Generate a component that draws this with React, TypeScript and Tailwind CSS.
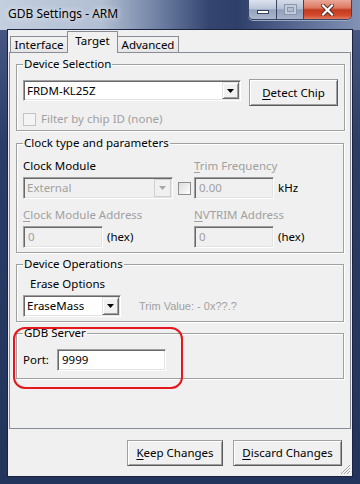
import React from 'react';

// sunken 3D edit/combo border used by the classic controls
const sunken =
  'border border-t-[#a0a0a0] border-l-[#a0a0a0] border-r-white border-b-white shadow-[inset_1px_1px_0_#696969,inset_-1px_-1px_0_#e3e3e3]';
const raised =
  'border border-t-[#e3e3e3] border-l-[#e3e3e3] border-r-[#696969] border-b-[#696969] shadow-[inset_1px_1px_0_#ffffff,inset_-1px_-1px_0_#a0a0a0]';

function U({ children }: { children: React.ReactNode }) {
    return <span className="underline decoration-1 underline-offset-[2px]">{children}</span>;
}

function Arrow({ disabled }: { disabled?: boolean }) {
    return (
        <svg width="7" height="4" viewBox="0 0 7 4">
            <path d="M0 0h7L3.5 4z" fill={disabled ? '#a8a8a8' : '#000000'} />
        </svg>
    );
}

function CheckBox({ disabled }: { disabled?: boolean }) {
    return (
        <div
            className={
                disabled
                    ? 'h-[13px] w-[13px] shrink-0 border border-[#c4c4c4] bg-[#f4f4f4]'
                    : 'h-[13px] w-[13px] shrink-0 border border-[#8e8f8f] bg-[linear-gradient(135deg,#dcdcdc,#ffffff)]'
            }
        />
    );
}

function Combo({ value, width, disabled }: { value: string; width: string; disabled?: boolean }) {
    return (
        <div className={`flex h-[22px] ${width} ${sunken} ${disabled ? 'bg-[#f0f0f0] text-[#a0a0a0]' : 'bg-white'}`}>
            <div className="flex flex-1 items-center pl-[3px]">{value}</div>
            <div
                className={`m-[1px] flex w-[17px] items-center justify-center bg-[#f0f0f0] ${
                    disabled ? 'border border-[#d0d0d0]' : raised
                }`}
            >
                <Arrow disabled={disabled} />
            </div>
        </div>
    );
}

function Edit({ value, width, disabled }: { value: string; width: string; disabled?: boolean }) {
    return (
        <div
            className={`flex h-[22px] items-center pl-[4px] ${width} ${sunken} ${
                disabled ? 'bg-[#f0f0f0] text-[#a0a0a0]' : 'bg-white'
            }`}
        >
            {value}
        </div>
    );
}

function Button({ width, height, children }: { width: string; height: string; children: React.ReactNode }) {
    return (
        <div
            className={`flex items-center justify-center bg-[#f0f0f0] ${width} ${height} border border-t-[#a0a0a0] border-l-[#a0a0a0] border-r-[#5a5a5a] border-b-[#5a5a5a] shadow-[inset_1px_1px_0_#ffffff,inset_-1px_-1px_0_#a0a0a0]`}
        >
            {children}
        </div>
    );
}

function Group({ title, className, children }: { title: string; className: string; children: React.ReactNode }) {
    return (
        <fieldset
            className={`border border-[#a0a0a0] px-[6px] shadow-[1px_1px_0_#ffffff,inset_1px_1px_0_#ffffff] ${className}`}
        >
            <legend className="px-[1px] leading-[16px]">{title}</legend>
            {children}
        </fieldset>
    );
}

function TitleBar() {
    return (
        <div className="flex h-[30px] items-start bg-[linear-gradient(90deg,#c3cedf_0%,#b2bfd3_28%,#6a7ca0_45%,#34466f_58%,#2e3f69_66%,#52648d_80%,#8292b4_100%)]">
            <div className="pl-[8px] pt-[6px] text-[12px] leading-[16px] [text-shadow:0_0_6px_#ffffff]">
                GDB Settings - ARM
            </div>
            <div className="ml-auto mr-[8px] flex h-[20px] overflow-hidden rounded-b-[5px] border border-t-0 border-[#3a4563] shadow-[0_1px_0_#9aa8c4]">
                <div className="flex w-[28px] items-start justify-center border-r border-[#3a4563] bg-[linear-gradient(180deg,#dde3ee_0%,#bcc6d8_45%,#94a2bd_52%,#aab7cd_100%)] pt-[10px]">
                    <div className="h-[4px] w-[12px] border border-[#37415c] bg-white" />
                </div>
                <div className="flex w-[27px] items-start justify-center border-r border-[#3a4563] bg-[linear-gradient(180deg,#d5dce8_0%,#b6c1d4_45%,#919fba_52%,#a6b3ca_100%)] pt-[4px]">
                    <div className="flex h-[11px] w-[13px] items-center justify-center border border-[#8a96ad] bg-[#c2cadb]">
                        <div className="h-[5px] w-[7px] border border-[#8a96ad] bg-[#b4bed2]" />
                    </div>
                </div>
                <div className="flex w-[47px] items-start justify-center bg-[linear-gradient(180deg,#eaa897_0%,#dc7760_42%,#c23a1f_52%,#d2492c_80%,#e27b60_100%)] pt-[4px]">
                    <svg width="13" height="12" viewBox="0 0 13 12">
                        <path d="M2 1.5l9 9M11 1.5l-9 9" stroke="#4a2a26" strokeWidth="4" strokeLinecap="square" />
                        <path d="M2 1.5l9 9M11 1.5l-9 9" stroke="#ffffff" strokeWidth="2.2" strokeLinecap="square" />
                    </svg>
                </div>
            </div>
        </div>
    );
}

function Tabs() {
    return (
        <div className="relative z-10 flex h-[22px] items-end pl-[2px]">
            <div className="flex h-[16px] w-[58px] items-center justify-center border border-b-0 border-[#898c95] bg-[linear-gradient(180deg,#f3f3f3,#e5e5e5)] leading-[14px]">
                Interface
            </div>
            <div className="-ml-[1px] -mb-[1px] flex h-[22px] w-[51px] items-start justify-center border border-b-0 border-[#898c95] bg-[#f0f0f0] pt-[2px] leading-[14px]">
                Target
            </div>
            <div className="-ml-[1px] flex h-[16px] w-[62px] items-center justify-center border border-b-0 border-[#898c95] bg-[linear-gradient(180deg,#f3f3f3,#e5e5e5)] leading-[14px]">
                Advanced
            </div>
        </div>
    );
}

export default function App() {
    return (
        <div className="relative flex h-[484px] w-[360px] flex-col overflow-hidden bg-[linear-gradient(180deg,#4c5e89_0%,#2b3c66_30%,#22335c_100%)] font-['Noto_Sans',sans-serif] text-[11.5px] leading-[16px] text-black">
            <TitleBar />
            <div className="relative mx-[8px] mb-[8px] flex flex-1 flex-col bg-[#f0f0f0] shadow-[0_0_0_1px_#1a2340]">
                <Tabs />
                <div className="mx-[1px] h-[377px] border border-[#898c95] bg-[#f0f0f0] px-[6px]">
                    {/* Device Selection */}
                    <Group title="Device Selection" className="mt-[3px] pb-[3px]">
                        <div className="mt-[7px] flex items-start">
                            <div className="mt-[1px] flex h-[21px] w-[218px] border border-t-[#a0a0a0] border-l-[#a0a0a0] border-r-white border-b-white bg-white shadow-[inset_1px_1px_0_#696969,inset_-1px_-1px_0_#e3e3e3]">
                                <div className="flex flex-1 items-center pl-[3px]">FRDM-KL25Z</div>
                                <div className={`m-[1px] flex w-[17px] items-center justify-center bg-[#f0f0f0] ${raised}`}>
                                    <Arrow />
                                </div>
                            </div>
                            <div className="ml-[8px]">
                                <Button width="w-[89px]" height="h-[27px]">
                                    <span>
                                        <U>D</U>etect Chip
                                    </span>
                                </Button>
                            </div>
                        </div>
                        <div className="mt-[5px] flex h-[16px] items-center gap-[5px] text-[#a0a0a0]">
                            <CheckBox disabled />
                            <span>Filter by chip ID (none)</span>
                        </div>
                    </Group>

                    {/* Clock type and parameters */}
                    <Group title="Clock type and parameters" className="mt-[4px] pb-[4px]">
                        <div className="mt-[7px] grid grid-cols-[171px_1fr]">
                            <div>Clock Module</div>
                            <div className="text-[#a0a0a0]">
                                <U>T</U>rim Frequency
                            </div>
                        </div>
                        <div className="mt-[3px] grid grid-cols-[171px_1fr]">
                            <div className="flex items-center gap-[5px]">
                                <Combo value="External" width="w-[150px]" disabled />
                                <CheckBox />
                            </div>
                            <div className="flex items-center gap-[4px]">
                                <Edit value="0.00" width="w-[80px]" disabled />
                                <span>kHz</span>
                            </div>
                        </div>
                        <div className="mt-[8px] grid grid-cols-[171px_1fr] text-[#a0a0a0]">
                            <div>
                                <U>C</U>lock Module Address
                            </div>
                            <div>
                                <U>N</U>VTRIM Address
                            </div>
                        </div>
                        <div className="mt-[3px] grid grid-cols-[171px_1fr]">
                            <div className="flex items-center gap-[4px]">
                                <Edit value="0" width="w-[80px]" disabled />
                                <span>(hex)</span>
                            </div>
                            <div className="flex items-center gap-[4px]">
                                <Edit value="0" width="w-[80px]" disabled />
                                <span>(hex)</span>
                            </div>
                        </div>
                    </Group>

                    {/* Device Operations */}
                    <Group title="Device Operations" className="mt-[3px] pb-[4px]">
                        <div className="ml-[7px] mt-[4px]">Erase Options</div>
                        <div className="mt-[3px] flex items-center">
                            <Combo value="EraseMass" width="w-[98px]" />
                            <span className="ml-[18px] font-['Liberation_Sans',sans-serif] text-[11px] text-[#a0a0a0]">
                                Trim Value: - 0x??.?
                            </span>
                        </div>
                    </Group>

                    {/* GDB Server */}
                    <Group title="GDB Server" className="mt-[3px] pb-[7px]">
                        <div className="mt-[8px] flex items-center">
                            <span className="w-[34px]">Port:</span>
                            <Edit value="9999" width="w-[109px]" />
                        </div>
                    </Group>
                </div>

                <div className="mt-[11px] flex justify-end gap-[10px] pr-[10px]">
                    <Button width="w-[96px]" height="h-[26px]">
                        <span>
                            <U>K</U>eep Changes
                        </span>
                    </Button>
                    <Button width="w-[109px]" height="h-[26px]">
                        <span>
                            <U>D</U>iscard Changes
                        </span>
                    </Button>
                </div>

                {/* size grip */}
                <svg className="absolute bottom-[1px] right-[1px]" width="11" height="11" viewBox="0 0 11 11">
                    <path d="M10 1L1 10M10 4L4 10M10 7L7 10" stroke="#a0a0a0" strokeWidth="1" />
                    <path d="M10 2L2 10M10 5L5 10M10 8L8 10" stroke="#ffffff" strokeWidth="1" />
                </svg>
            </div>

            {/* red annotation ring */}
            <div className="absolute left-[13px] top-[327px] h-[62px] w-[170px] rounded-[12px] border-2 border-[#e5161c]" />
        </div>
    );
}
